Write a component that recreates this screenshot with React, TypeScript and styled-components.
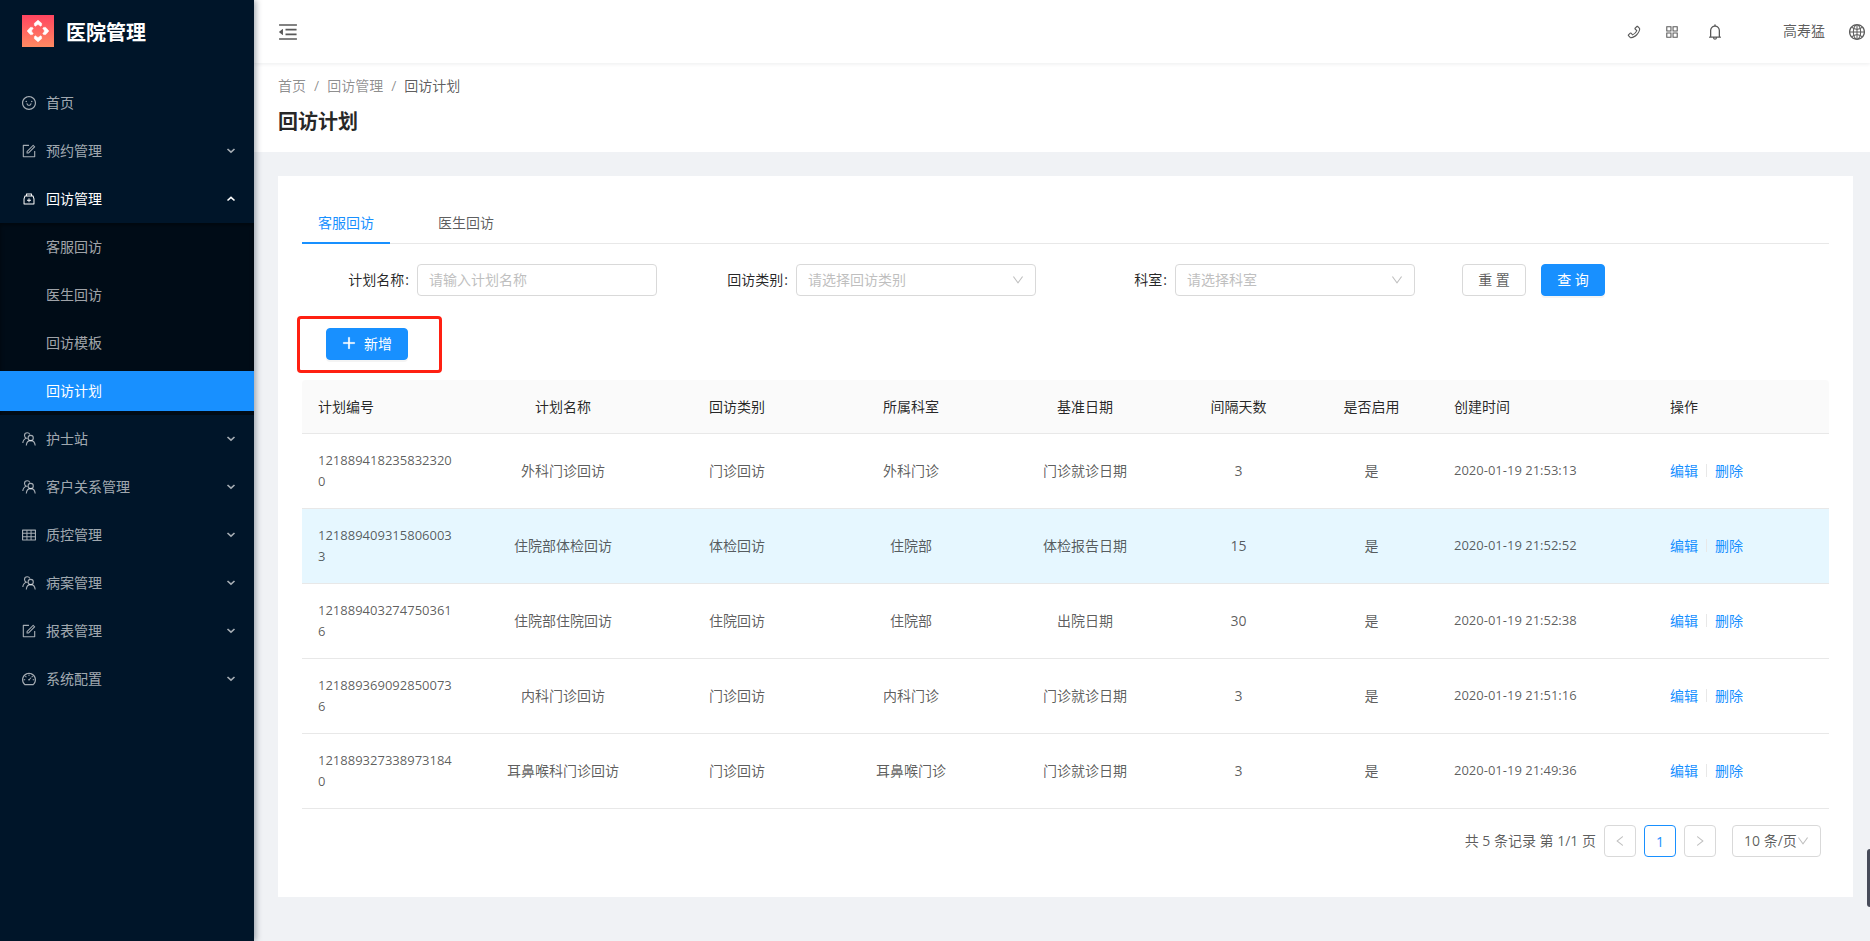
import React from "react";
import styled, { createGlobalStyle, css } from "styled-components";
import {
  AiOutlineAppstore,
  AiOutlineBell,
  AiOutlineDashboard,
  AiOutlineDown,
  AiOutlineForm,
  AiOutlineGlobal,
  AiOutlineLeft,
  AiOutlineMedicineBox,
  AiOutlineMenuFold,
  AiOutlinePhone,
  AiOutlinePlus,
  AiOutlineRight,
  AiOutlineSmile,
  AiOutlineTable,
} from "react-icons/ai";

const fontStack = `"Open Sans", "Noto Sans CJK SC", sans-serif`;

const GlobalStyle = createGlobalStyle`
  *, *::before, *::after { box-sizing: border-box; }
  body {
    margin: 0;
    background: #f0f2f5;
    color: rgba(0, 0, 0, 0.65);
    font-family: ${fontStack};
    font-size: 14px;
    line-height: 21px;
  }
  button, input, select { font: inherit; color: inherit; }
  a { color: inherit; text-decoration: none; }
  ul, ol { margin: 0; padding: 0; list-style: none; }
  svg { display: block; flex: none; }
`;

const Layout = styled.div`
  display: flex;
  min-height: 100vh;
`;

/* ---------- sidebar ---------- */

const Sidebar = styled.aside`
  position: relative;
  z-index: 2;
  flex: none;
  width: 254px;
  background: #001529;
  box-shadow: 2px 0 6px rgba(0, 21, 41, 0.35);
`;

const Brand = styled.a`
  display: flex;
  align-items: center;
  gap: 12px;
  height: 62px;
  padding-left: 22px;
  color: #fff;
  font-size: 20px;
  font-weight: 700;
`;

const BrandName = styled.span`
  padding-top: 3px;
`;

const Menu = styled.ul`
  padding-top: 17px;
`;

const menuRow = css`
  display: flex;
  align-items: center;
  width: 100%;
  height: 40px;
  margin: 4px 0;
  border: 0;
  background: none;
  cursor: pointer;
  text-align: left;
`;

const MenuButton = styled.button<{ $open?: boolean }>`
  ${menuRow}
  gap: 10px;
  padding: 0 18px 0 22px;
  color: ${(p) => (p.$open ? "#fff" : "rgba(255, 255, 255, 0.65)")};
`;

const MenuLabel = styled.span`
  flex: 1;
  padding-bottom: 2px;
`;

const MenuItem = styled.li`
  display: flow-root;
`;

const SubMenu = styled.ul`
  background: #000c17;
  box-shadow: inset 0 2px 4px rgba(0, 0, 0, 0.45);
`;

const SubLink = styled.a<{ $active?: boolean }>`
  ${menuRow}
  padding: 0 0 2px 46px;
  color: ${(p) => (p.$active ? "#fff" : "rgba(255, 255, 255, 0.65)")};
  background: ${(p) => (p.$active ? "#1890ff" : "transparent")};
`;

/* ---------- header ---------- */

const Main = styled.div`
  flex: 1;
  min-width: 0;
`;

const TopBar = styled.header`
  position: relative;
  display: flex;
  align-items: center;
  justify-content: space-between;
  height: 63px;
  padding: 0 5px 0 24px;
  background: #fff;
  box-shadow: 0 1px 4px rgba(0, 21, 41, 0.08);
`;

const IconButton = styled.button`
  display: flex;
  padding: 0;
  border: 0;
  background: none;
  cursor: pointer;
`;

const Tools = styled.div`
  display: flex;
  align-items: center;
  gap: 24px;
`;

const QuickTools = styled(Tools)`
  margin-right: 4px;
`;

const UserName = styled.a`
  margin-left: 36px;
  padding-bottom: 2px;
`;

const PageHead = styled.div`
  height: 89px;
  padding: 12px 24px;
  background: #fff;
`;

const Crumbs = styled.ol`
  display: flex;
  color: rgba(0, 0, 0, 0.45);

  li + li::before {
    content: "/";
    margin: 0 8px;
    color: rgba(0, 0, 0, 0.45);
  }
  li:last-child {
    color: rgba(0, 0, 0, 0.65);
  }
`;

const PageTitle = styled.h1`
  margin: 10px 0 0;
  color: rgba(0, 0, 0, 0.85);
  font-size: 20px;
  font-weight: 700;
  line-height: 32px;
`;

/* ---------- card ---------- */

const Card = styled.main`
  margin: 24px 17px 44px 24px;
  padding: 24px;
  background: #fff;
`;

const Tabs = styled.div`
  display: flex;
  gap: 32px;
  height: 44px;
  box-shadow: inset 0 -1px 0 #e8e8e8;
`;

const Tab = styled.button<{ $active?: boolean }>`
  padding: 3px 16px 0;
  border: 0;
  border-bottom: 2px solid ${(p) => (p.$active ? "#1890ff" : "transparent")};
  background: none;
  color: ${(p) => (p.$active ? "#1890ff" : "inherit")};
  cursor: pointer;
`;

const Filters = styled.form`
  display: flex;
  flex-wrap: wrap;
  gap: 16px 70px;
  padding: 20px 0 20px 46px;
`;

const Field = styled.div`
  display: flex;
  align-items: center;
`;

const FieldLabel = styled.label`
  display: flex;
  justify-content: flex-end;
  gap: 1px;
  width: 69px;
  padding: 0 8px 2px 0;
  color: rgba(0, 0, 0, 0.85);
  white-space: nowrap;

  &::after {
    content: ":";
  }
`;

const control = css`
  height: 32px;
  border: 1px solid #d9d9d9;
  border-radius: 4px;
  background: #fff;
`;

const TextInput = styled.input`
  ${control}
  width: 240px;
  padding: 0 11px 2px;

  &::placeholder {
    color: #bfbfbf;
    opacity: 1;
  }
`;

const SelectWrap = styled.div`
  display: grid;
  align-items: center;

  > * {
    grid-area: 1 / 1;
  }
  svg {
    justify-self: end;
    margin-right: 12px;
    color: #bfbfbf;
    pointer-events: none;
  }
`;

const Select = styled.select<{ $width: number; $muted?: boolean }>`
  ${control}
  appearance: none;
  width: ${(p) => p.$width}px;
  padding: 0 11px 2px;
  color: ${(p) => (p.$muted ? "#bfbfbf" : "inherit")};
`;

const Actions = styled.div`
  display: flex;
  gap: 15px;
  margin-left: -23px;
`;

const Button = styled.button<{ $primary?: boolean }>`
  ${control}
  display: flex;
  align-items: center;
  justify-content: center;
  gap: 8px;
  min-width: 64px;
  padding: 0 15px 2px;
  cursor: pointer;
  ${(p) =>
    p.$primary &&
    css`
      border-color: #1890ff;
      background: #1890ff;
      color: #fff;
      box-shadow: 0 2px 0 rgba(0, 0, 0, 0.045);
    `}
`;

const Toolbar = styled.div`
  display: flex;
  padding: 12px 24px 20px;
`;

const Highlight = styled.div`
  position: relative;

  &::after {
    content: "";
    position: absolute;
    inset: -12px -34px -13px -29px;
    border: 3px solid #ff2012;
    border-radius: 4px;
    pointer-events: none;
  }
`;

/* ---------- table ---------- */

const Table = styled.table`
  width: 100%;
  border-spacing: 0;
  table-layout: fixed;
`;

const cell = css<{ $center?: boolean }>`
  padding: 16px;
  border-bottom: 1px solid #e8e8e8;
  text-align: ${(p) => (p.$center ? "center" : "left")};
`;

const Th = styled.th<{ $center?: boolean }>`
  ${cell}
  background: #fafafa;
  color: rgba(0, 0, 0, 0.85);
  font-weight: 400;

  &:first-child {
    border-top-left-radius: 4px;
  }
  &:last-child {
    border-top-right-radius: 4px;
  }
`;

const Td = styled.td<{ $center?: boolean }>`
  ${cell}
  padding: 15px 16px 17px;
`;

const NumberTd = styled(Td)`
  padding: 16px 20px 16px 16px;
  font-size: 13px;
  word-break: break-all;
`;

const DateTd = styled(Td)`
  font-size: 13px;
`;

const Tr = styled.tr<{ $hovered?: boolean }>`
  background: ${(p) => (p.$hovered ? "#e6f7ff" : "transparent")};
`;

const RowActions = styled.div`
  display: flex;
  align-items: center;
  color: #1890ff;

  a + a {
    display: flex;
    align-items: center;
  }
  a + a::before {
    content: "";
    width: 1px;
    height: 13px;
    margin: 0 8px;
    background: #e8e8e8;
  }
`;

const Pagination = styled.nav`
  display: flex;
  align-items: center;
  justify-content: flex-end;
  gap: 8px;
  padding: 16px 8px;
`;

const Total = styled.span`
  padding-bottom: 2px;
`;

const PageButton = styled.button<{ $active?: boolean }>`
  ${control}
  display: flex;
  align-items: center;
  justify-content: center;
  width: 32px;
  padding: 0;
  border-color: ${(p) => (p.$active ? "#1890ff" : "#d9d9d9")};
  color: ${(p) => (p.$active ? "#1890ff" : "rgba(0, 0, 0, 0.25)")};
`;

const PageSize = styled(SelectWrap)`
  margin-left: 8px;
`;

const SideHandle = styled.div`
  position: fixed;
  right: 0;
  top: 849px;
  width: 3px;
  height: 58px;
  border-radius: 3px 0 0 3px;
  background: #474b59;
`;

/* ---------- icons ---------- */

/* crops the empty margin of the icon grid so glyphs fill their box */
const tight = { viewBox: "64 64 896 896" };

const petals = [0, 90, 180, 270];

const LogoIcon = () => (
  <svg width="32" height="32" viewBox="0 0 32 32" aria-hidden="true">
    <defs>
      <linearGradient id="brand" x1="0" y1="0" x2="0" y2="1">
        <stop offset="0" stopColor="#ff4460" />
        <stop offset="1" stopColor="#ff8a62" />
      </linearGradient>
    </defs>
    <rect width="32" height="32" fill="url(#brand)" />
    {petals.map((angle) => (
      <path
        key={angle}
        transform={`rotate(${angle} 16 16)`}
        d="M16 5.200 19.600 8.300V10.400L18.200 11.200Q17.700 9.600 16 9.600Q14.300 9.600 13.800 11.200L12.400 10.400V8.300Z"
        fill="#fff"
        stroke="#fff"
        strokeWidth=".6"
        strokeLinejoin="round"
      />
    ))}
  </svg>
);

const PeopleIcon = () => (
  <svg
    width="14"
    height="14"
    viewBox="0 0 14 14"
    fill="none"
    stroke="currentColor"
    strokeWidth="1.1"
    aria-hidden="true"
  >
    <circle cx="8.7" cy="6" r="2.6" />
    <path d="M4.300 13.500c.2-2.800 1.900-4.900 4.400-4.900s4.200 2.100 4.500 4.900" />
    <path d="M7.900 2.400C7.300 1.300 6.400.8 5.300.8 3.600.8 2.500 2 2.500 3.500c0 1.300.8 2.300 1.900 2.700C2.200 6.900 1 8.700.8 11" />
  </svg>
);

const Caret = ({ up }: { up?: boolean }) => (
  <svg
    width="10"
    height="8"
    viewBox="0 0 10 8"
    fill="none"
    stroke="currentColor"
    strokeWidth="1.6"
    aria-hidden="true"
  >
    <path d={up ? "M1.500 5.500 5 2.300l3.500 3.200" : "M1.500 2 5 5.200 8.500 2"} />
  </svg>
);

/* ---------- data ---------- */

type Entry = {
  label: string;
  icon: React.ReactNode;
  leaf?: boolean;
  children?: string[];
};

const menu: Entry[] = [
  { label: "首页", icon: <AiOutlineSmile {...tight} />, leaf: true },
  { label: "预约管理", icon: <AiOutlineForm {...tight} /> },
  {
    label: "回访管理",
    icon: <AiOutlineMedicineBox />,
    children: ["客服回访", "医生回访", "回访模板", "回访计划"],
  },
  { label: "护士站", icon: <PeopleIcon /> },
  { label: "客户关系管理", icon: <PeopleIcon /> },
  { label: "质控管理", icon: <AiOutlineTable {...tight} /> },
  { label: "病案管理", icon: <PeopleIcon /> },
  { label: "报表管理", icon: <AiOutlineForm {...tight} /> },
  { label: "系统配置", icon: <AiOutlineDashboard {...tight} /> },
];

const columns = [
  { title: "计划编号", width: 174 },
  { title: "计划名称", width: 174, center: true },
  { title: "回访类别", width: 174, center: true },
  { title: "所属科室", width: 174, center: true },
  { title: "基准日期", width: 174, center: true },
  { title: "间隔天数", width: 133, center: true },
  { title: "是否启用", width: 133, center: true },
  { title: "创建时间", width: 216 },
  { title: "操作", width: 175 },
];

const rows = [
  ["1218894182358323200", "外科门诊回访", "门诊回访", "外科门诊", "门诊就诊日期", "3", "是", "2020-01-19 21:53:13"],
  ["1218894093158060033", "住院部体检回访", "体检回访", "住院部", "体检报告日期", "15", "是", "2020-01-19 21:52:52"],
  ["1218894032747503616", "住院部住院回访", "住院回访", "住院部", "出院日期", "30", "是", "2020-01-19 21:52:38"],
  ["1218893690928500736", "内科门诊回访", "门诊回访", "内科门诊", "门诊就诊日期", "3", "是", "2020-01-19 21:51:16"],
  ["1218893273389731840", "耳鼻喉科门诊回访", "门诊回访", "耳鼻喉门诊", "门诊就诊日期", "3", "是", "2020-01-19 21:49:36"],
];

export default function App() {
  return (
    <>
      <GlobalStyle />
      <Layout>
        <Sidebar>
          <Brand href="#">
            <LogoIcon />
            <BrandName>医院管理</BrandName>
          </Brand>
          <nav>
            <Menu>
              {menu.map((m) => (
                <MenuItem key={m.label}>
                  <MenuButton $open={!!m.children}>
                    {m.icon}
                    <MenuLabel>{m.label}</MenuLabel>
                    {!m.leaf && <Caret up={!!m.children} />}
                  </MenuButton>
                  {m.children && (
                    <SubMenu>
                      {m.children.map((c) => (
                        <MenuItem key={c}>
                          <SubLink href="#" $active={c === "回访计划"}>
                            {c}
                          </SubLink>
                        </MenuItem>
                      ))}
                    </SubMenu>
                  )}
                </MenuItem>
              ))}
            </Menu>
          </nav>
        </Sidebar>

        <Main>
          <TopBar>
            <IconButton aria-label="收起菜单">
              <AiOutlineMenuFold size={20} {...tight} />
            </IconButton>
            <Tools>
              <QuickTools>
                <IconButton aria-label="电话">
                  <AiOutlinePhone size={14} {...tight} />
                </IconButton>
                <IconButton aria-label="应用">
                  <AiOutlineAppstore size={14} {...tight} />
                </IconButton>
              </QuickTools>
              <IconButton aria-label="通知">
                <AiOutlineBell size={16} {...tight} />
              </IconButton>
              <UserName href="#">高寿猛</UserName>
              <IconButton aria-label="语言">
                <AiOutlineGlobal size={16} {...tight} />
              </IconButton>
            </Tools>
          </TopBar>

          <PageHead>
            <Crumbs>
              <li>
                <a href="#">首页</a>
              </li>
              <li>
                <a href="#">回访管理</a>
              </li>
              <li>回访计划</li>
            </Crumbs>
            <PageTitle>回访计划</PageTitle>
          </PageHead>

          <Card>
            <Tabs role="tablist">
              <Tab role="tab" aria-selected="true" $active>
                客服回访
              </Tab>
              <Tab role="tab" aria-selected="false">
                医生回访
              </Tab>
            </Tabs>

            <Filters onSubmit={(e) => e.preventDefault()}>
              <Field>
                <FieldLabel htmlFor="plan-name">计划名称</FieldLabel>
                <TextInput id="plan-name" placeholder="请输入计划名称" />
              </Field>
              <Field>
                <FieldLabel htmlFor="plan-type">回访类别</FieldLabel>
                <SelectWrap>
                  <Select id="plan-type" $width={240} $muted>
                    <option>请选择回访类别</option>
                  </Select>
                  <AiOutlineDown size={12} {...tight} />
                </SelectWrap>
              </Field>
              <Field>
                <FieldLabel htmlFor="department">科室</FieldLabel>
                <SelectWrap>
                  <Select id="department" $width={240} $muted>
                    <option>请选择科室</option>
                  </Select>
                  <AiOutlineDown size={12} {...tight} />
                </SelectWrap>
              </Field>
              <Actions>
                <Button type="reset">重 置</Button>
                <Button type="submit" $primary>
                  查 询
                </Button>
              </Actions>
            </Filters>

            <Toolbar>
              <Highlight>
                <Button type="button" $primary>
                  <AiOutlinePlus size={14} strokeWidth={40} {...tight} />
                  新增
                </Button>
              </Highlight>
            </Toolbar>

            <Table>
              <colgroup>
                {columns.map((c) => (
                  <col key={c.title} width={c.width} />
                ))}
              </colgroup>
              <thead>
                <tr>
                  {columns.map((c) => (
                    <Th key={c.title} $center={c.center}>
                      {c.title}
                    </Th>
                  ))}
                </tr>
              </thead>
              <tbody>
                {rows.map(([id, ...rest], i) => (
                  <Tr key={id} $hovered={i === 1}>
                    <NumberTd>{id}</NumberTd>
                    {rest.slice(0, 6).map((v, j) => (
                      <Td key={j} $center>
                        {v}
                      </Td>
                    ))}
                    <DateTd>{rest[6]}</DateTd>
                    <Td>
                      <RowActions>
                        <a href="#">编辑</a>
                        <a href="#">删除</a>
                      </RowActions>
                    </Td>
                  </Tr>
                ))}
              </tbody>
            </Table>

            <Pagination aria-label="分页">
              <Total>共 5 条记录 第 1/1 页</Total>
              <PageButton aria-label="上一页" disabled>
                <AiOutlineLeft size={12} {...tight} />
              </PageButton>
              <PageButton $active>1</PageButton>
              <PageButton aria-label="下一页" disabled>
                <AiOutlineRight size={12} {...tight} />
              </PageButton>
              <PageSize>
                <Select aria-label="每页条数" $width={89}>
                  <option>10 条/页</option>
                </Select>
                <AiOutlineDown size={12} {...tight} />
              </PageSize>
            </Pagination>
          </Card>
        </Main>
      </Layout>
      <SideHandle />
    </>
  );
}
